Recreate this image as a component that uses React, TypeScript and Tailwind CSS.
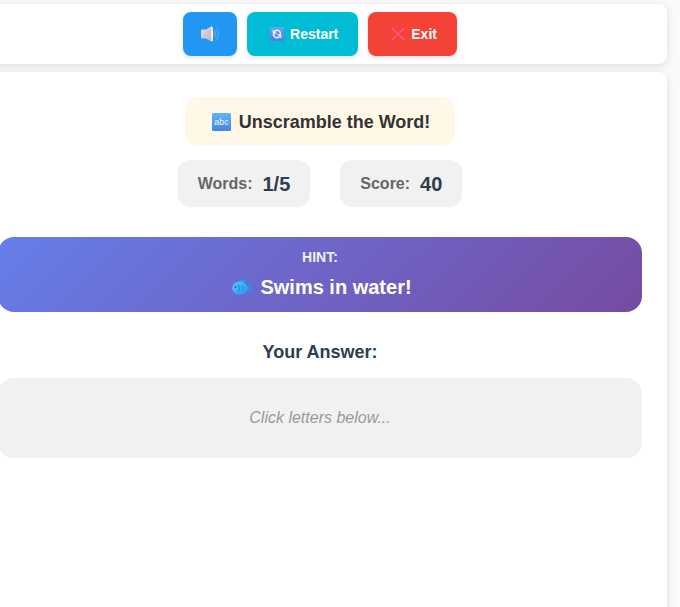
import React from "react";

function SpeakerIcon() {
  return (
    <svg width="18" height="16" viewBox="0 0 18 16" aria-hidden="true">
      <defs>
        <linearGradient id="cone" x1="0" y1="0" x2="1" y2="1">
          <stop offset="0" stopColor="#e6dfe9" />
          <stop offset="1" stopColor="#b9b0c4" />
        </linearGradient>
      </defs>
      <path d="M0 4.500Q0 3.500 1 3.500H5L10 .5Q11.500 0 11.500 2V14Q11.500 16 10 15.200L5 12.500H1Q0 12.500 0 11.500Z" fill="url(#cone)" />
      <path d="M10 .5Q12 0 12 3V13Q12 16 10 15.200Z" fill="#f3eff4" />
      <path d="M12 5.500Q14.500 8 12 10.500Z" fill="#8d93ad" />
      <path d="M13.500 4Q16 8 13.500 12M15.500 2Q19 8 15.500 14" fill="none" stroke="#6fb0ea" strokeWidth="0.800" />
    </svg>
  );
}

function RestartIcon() {
  return (
    <svg width="14" height="14" viewBox="0 0 14 14" aria-hidden="true">
      <defs>
        <linearGradient id="tile" x1="0" y1="0" x2="0" y2="1">
          <stop offset="0" stopColor="#62a4f8" />
          <stop offset="1" stopColor="#4a7fe4" />
        </linearGradient>
      </defs>
      <rect width="14" height="14" rx="1" fill="url(#tile)" />
      <path d="M4.500 4.500Q7 2.300 9.300 4Q10.500 5 10.500 7M9.500 9.700Q7 11.700 4.800 10Q3.500 9 3.500 7" fill="none" stroke="#f1f4ff" strokeWidth="1.500" />
      <path d="M2.700 2.500V6.800H7ZM11.300 11.500V7.200H7Z" fill="#f1f4ff" />
    </svg>
  );
}

function CrossIcon() {
  return (
    <svg width="14" height="14" viewBox="0 0 14 14" aria-hidden="true">
      <path d="M1.200 1.200L12.800 12.800M12.800 1.200L1.200 12.800" stroke="#fb5590" strokeWidth="1.600" strokeLinecap="round" />
    </svg>
  );
}

function AbcIcon() {
  return (
    <svg width="19" height="18" viewBox="0 0 19 18" aria-hidden="true">
      <defs>
        <linearGradient id="abc" x1="0" y1="0" x2="0" y2="1">
          <stop offset="0" stopColor="#5db4fb" />
          <stop offset="1" stopColor="#4583e3" />
        </linearGradient>
      </defs>
      <rect width="19" height="18" rx="1.500" fill="url(#abc)" />
      <text x="9.500" y="12" textAnchor="middle" fontSize="9" fontWeight="400" fill="#f4f8ff" fontFamily="'Liberation Sans', Arial, sans-serif">abc</text>
    </svg>
  );
}

function FishIcon() {
  return (
    <svg width="20" height="17" viewBox="0 0 20 17" aria-hidden="true">
      <defs>
        <linearGradient id="fish" x1="0" y1="0" x2="1" y2="1">
          <stop offset="0" stopColor="#53ccff" />
          <stop offset="1" stopColor="#378cf3" />
        </linearGradient>
      </defs>
      <path d="M6 3Q8 0 13.500 0Q14 1.500 12 4Z" fill="#269bea" />
      <path d="M15 9Q16 4 19.500 3.500Q20 4.500 18.500 8.500Q18.500 10 20 13.500Q19.500 15 17.500 13.500Q15.500 12 15 9.500Z" fill="#258ff0" />
      <path d="M7 14.500L9.500 17L12 14Z" fill="#237ee9" />
      <path d="M0 9Q1 2.500 8 2.500Q14 3 16 9Q14 15.500 8 15.800Q1 15.500 0 9Z" fill="url(#fish)" />
      <path d="M6 5.500Q9 9 6.500 13" fill="none" stroke="#2480d6" strokeWidth="1" />
      <path d="M9 7Q12.500 6.500 12 9.500Q11 12 9 11" fill="none" stroke="#2487df" strokeWidth="1" />
      <circle cx="3.500" cy="8" r="0.900" fill="#235fae" />
    </svg>
  );
}

function Stat({ label, value }: { label: string; value: string }) {
  return (
    <div className="flex h-[47px] items-center gap-2.5 rounded-xl bg-[#f1f1f1] px-5">
      <span className="text-base font-bold text-[#666666]">{label}</span>
      <span className="text-xl leading-6 font-bold text-[#2c3e50]">{value}</span>
    </div>
  );
}

const button =
  "flex h-11 items-center justify-center rounded-lg text-sm font-bold text-white shadow-[0_2px_4px_rgba(0,0,0,0.12)]";

export default function App() {
  return (
    <div className="h-screen overflow-hidden bg-[#fafafa] pt-1 font-['Liberation_Sans',Arial,sans-serif]">
      <div className="mr-[13px] -ml-[27px] flex flex-col gap-2">
        <header className="flex justify-center gap-2.5 rounded-lg bg-white p-2 shadow-[0_2px_8px_rgba(0,0,0,0.12)]">
          <button type="button" aria-label="Sound" className={`${button} w-[54px] bg-[#2196f3]`}>
            <SpeakerIcon />
          </button>
          <button type="button" className={`${button} gap-1.5 bg-[#00bcd4] pr-5 pl-[23px]`}>
            <RestartIcon />
            Restart
          </button>
          <button type="button" className={`${button} gap-1.5 bg-[#f44336] pr-5 pl-[23px]`}>
            <CrossIcon />
            Exit
          </button>
        </header>
        <main className="flex min-h-screen flex-col items-center rounded-lg bg-white p-[25px] shadow-[0_2px_8px_rgba(0,0,0,0.12)]">
          <h1 className="flex h-12 items-center gap-2 rounded-xl bg-[#fff8e6] pt-0.5 pr-[25px] pl-[27px] text-lg font-bold text-[#333333]">
            <AbcIcon />
            Unscramble the Word!
          </h1>
          <div className="mt-[15px] flex gap-[30px]">
            <Stat label="Words:" value="1/5" />
            <Stat label="Score:" value="40" />
          </div>
          <section className="mt-[30px] flex w-full flex-col items-center gap-2 rounded-2xl bg-[linear-gradient(135deg,#667eea_0%,#764ba2_100%)] pt-3 pb-[11px] text-white">
            <h2 className="text-sm leading-4 font-bold opacity-90">HINT:</h2>
            <p className="flex items-center gap-2 pl-1 text-xl leading-7 font-bold">
              <FishIcon />
              Swims in water!
            </p>
          </section>
          <h2 className="mt-[30px] text-lg leading-5 font-bold text-[#2c3e50]">Your Answer:</h2>
          <div className="mt-4 flex h-20 w-full items-center justify-center rounded-2xl bg-[#f1f1f1] text-base text-[#999999] italic">
            Click letters below...
          </div>
        </main>
      </div>
    </div>
  );
}
